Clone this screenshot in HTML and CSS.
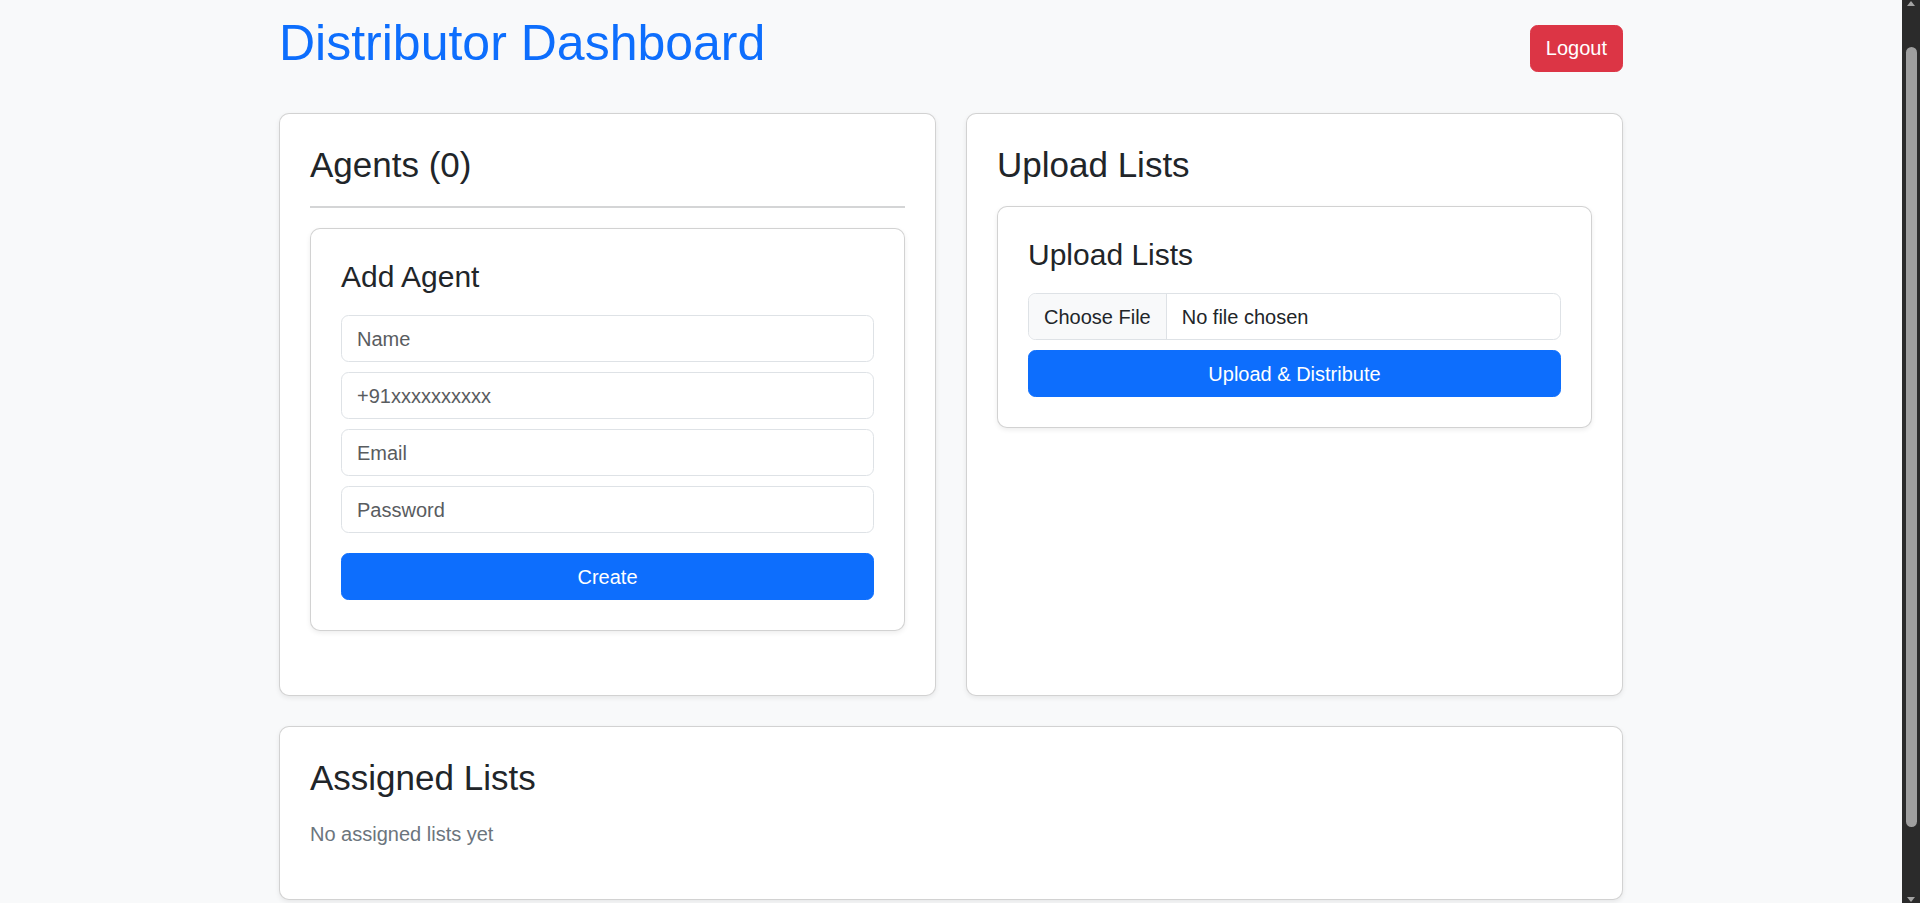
FILE: index.html
```html
<!DOCTYPE html>
<html lang="en">
<head>
<meta charset="utf-8">
<title>Distributor Dashboard</title>
<link rel="stylesheet" href="styles.css">
</head>
<body>
<div class="container">
  <header class="page-header">
    <h1 class="page-title">Distributor Dashboard</h1>
    <button class="btn btn-danger" type="button">Logout</button>
  </header>

  <div class="top-grid">
    <section class="card">
      <h3 class="card-title">Agents (0)</h3>
      <hr class="divider">
      <div class="card inner-card agent-card">
        <h4 class="sub-title">Add Agent</h4>
        <form class="agent-form">
          <input class="form-control" type="text" placeholder="Name">
          <input class="form-control" type="text" placeholder="+91xxxxxxxxxx">
          <input class="form-control" type="email" placeholder="Email">
          <input class="form-control" type="password" placeholder="Password">
          <button class="btn btn-primary btn-block create-btn" type="button">Create</button>
        </form>
      </div>
    </section>

    <section class="card">
      <h3 class="card-title title-gap">Upload Lists</h3>
      <div class="card inner-card">
        <h4 class="sub-title">Upload Lists</h4>
        <div class="file-input">
          <span class="file-btn">Choose File</span>
          <span class="file-name">No file chosen</span>
        </div>
        <button class="btn btn-primary btn-block" type="button">Upload &amp; Distribute</button>
      </div>
    </section>
  </div>

  <section class="card assigned-card">
    <h3 class="card-title title-gap">Assigned Lists</h3>
    <p class="muted">No assigned lists yet</p>
  </section>
</div>

<aside class="scrollbar" aria-hidden="true">
  <span class="sb-arrow sb-up"></span>
  <span class="sb-track"><span class="sb-thumb"></span></span>
  <span class="sb-arrow sb-down"></span>
</aside>
</body>
</html>
```

FILE: styles.css
```css
* {
  box-sizing: border-box;
}

html, body {
  margin: 0;
  padding: 0;
}

body {
  background: #f8f9fa;
  color: #212529;
  font-family: "Liberation Sans", Arial, sans-serif;
  font-size: 20px;
  line-height: 1.5;
  padding-right: 18px;
}

.container {
  width: 1344px;
  margin: 0 auto;
  padding: 13px 0 120px;
}

.page-header {
  display: flex;
  justify-content: space-between;
  align-items: center;
  margin-bottom: 30px;
}

.page-title {
  margin: 0 0 10px;
  font-size: 50px;
  font-weight: 400;
  line-height: 1.2;
  color: #0d6efd;
}

.btn {
  font-family: inherit;
  font-size: 20px;
  line-height: 1.5;
  padding: 7.5px 15px;
  border: 1px solid transparent;
  border-radius: 7.5px;
  color: #fff;
  cursor: pointer;
}

.btn-danger {
  background: #dc3545;
  border-color: #dc3545;
}

.btn-primary {
  background: #0d6efd;
  border-color: #0d6efd;
}

.btn-block {
  display: block;
  width: 100%;
}

.top-grid {
  display: grid;
  grid-template-columns: 1fr 1fr;
  gap: 30px;
  margin-bottom: 30px;
}

.card {
  background: #fff;
  border: 1px solid rgba(0, 0, 0, 0.175);
  border-radius: 10px;
  padding: 30px;
  box-shadow: 0 2px 5px rgba(0, 0, 0, 0.075);
}

.card-title {
  margin: 0;
  font-size: 35px;
  font-weight: 400;
  line-height: 1.2;
}

.title-gap {
  margin-bottom: 20px;
}

.divider {
  margin: 20px 0;
  border: 0;
  border-top: 2px solid #d4d5d6;
}

.agent-card {
  margin-bottom: 34px;
}

.sub-title {
  margin: 0 0 20px;
  font-size: 30px;
  font-weight: 400;
  line-height: 1.2;
}

.agent-form {
  display: flex;
  flex-direction: column;
  gap: 10px;
}

.form-control {
  display: block;
  width: 100%;
  font-family: inherit;
  font-size: 20px;
  line-height: 1.5;
  padding: 7.5px 15px;
  color: #212529;
  background: #fff;
  border: 1px solid #dee2e6;
  border-radius: 7.5px;
  outline: none;
}

.form-control::placeholder {
  color: #595c5f;
  opacity: 1;
}

.create-btn {
  margin-top: 10px;
}

.file-input {
  display: flex;
  align-items: stretch;
  height: 47px;
  border: 1px solid #dee2e6;
  border-radius: 7.5px;
  overflow: hidden;
  margin-bottom: 10px;
}

.file-btn {
  display: flex;
  align-items: center;
  padding: 0 15px;
  background: #f8f9fa;
  border-right: 1px solid #dee2e6;
  color: #212529;
}

.file-name {
  display: flex;
  align-items: center;
  padding: 0 15px;
  color: #212529;
}

.muted {
  margin: 0 0 20px;
  color: #6c757d;
}

/* window scrollbar as captured in the screenshot */
.scrollbar {
  position: fixed;
  top: 0;
  right: 0;
  width: 18px;
  height: 100vh;
  background: #2b2b2b;
  display: flex;
  flex-direction: column;
  align-items: center;
}

.sb-arrow {
  flex: 0 0 17px;
  width: 18px;
  position: relative;
}

.sb-arrow::before {
  content: "";
  position: absolute;
  left: 4.5px;
  width: 0;
  height: 0;
  border-left: 4.5px solid transparent;
  border-right: 4.5px solid transparent;
}

.sb-up::before {
  top: 1px;
  border-bottom: 5px solid #a3a3a3;
}

.sb-down::before {
  bottom: 1px;
  border-top: 5px solid #a3a3a3;
}

.sb-track {
  flex: 1;
  width: 18px;
  display: flex;
  justify-content: center;
  padding-top: 30px;
  padding-bottom: 59px;
}

.sb-thumb {
  width: 11px;
  height: 100%;
  border-radius: 6px;
  background: #9f9f9f;
}
```
